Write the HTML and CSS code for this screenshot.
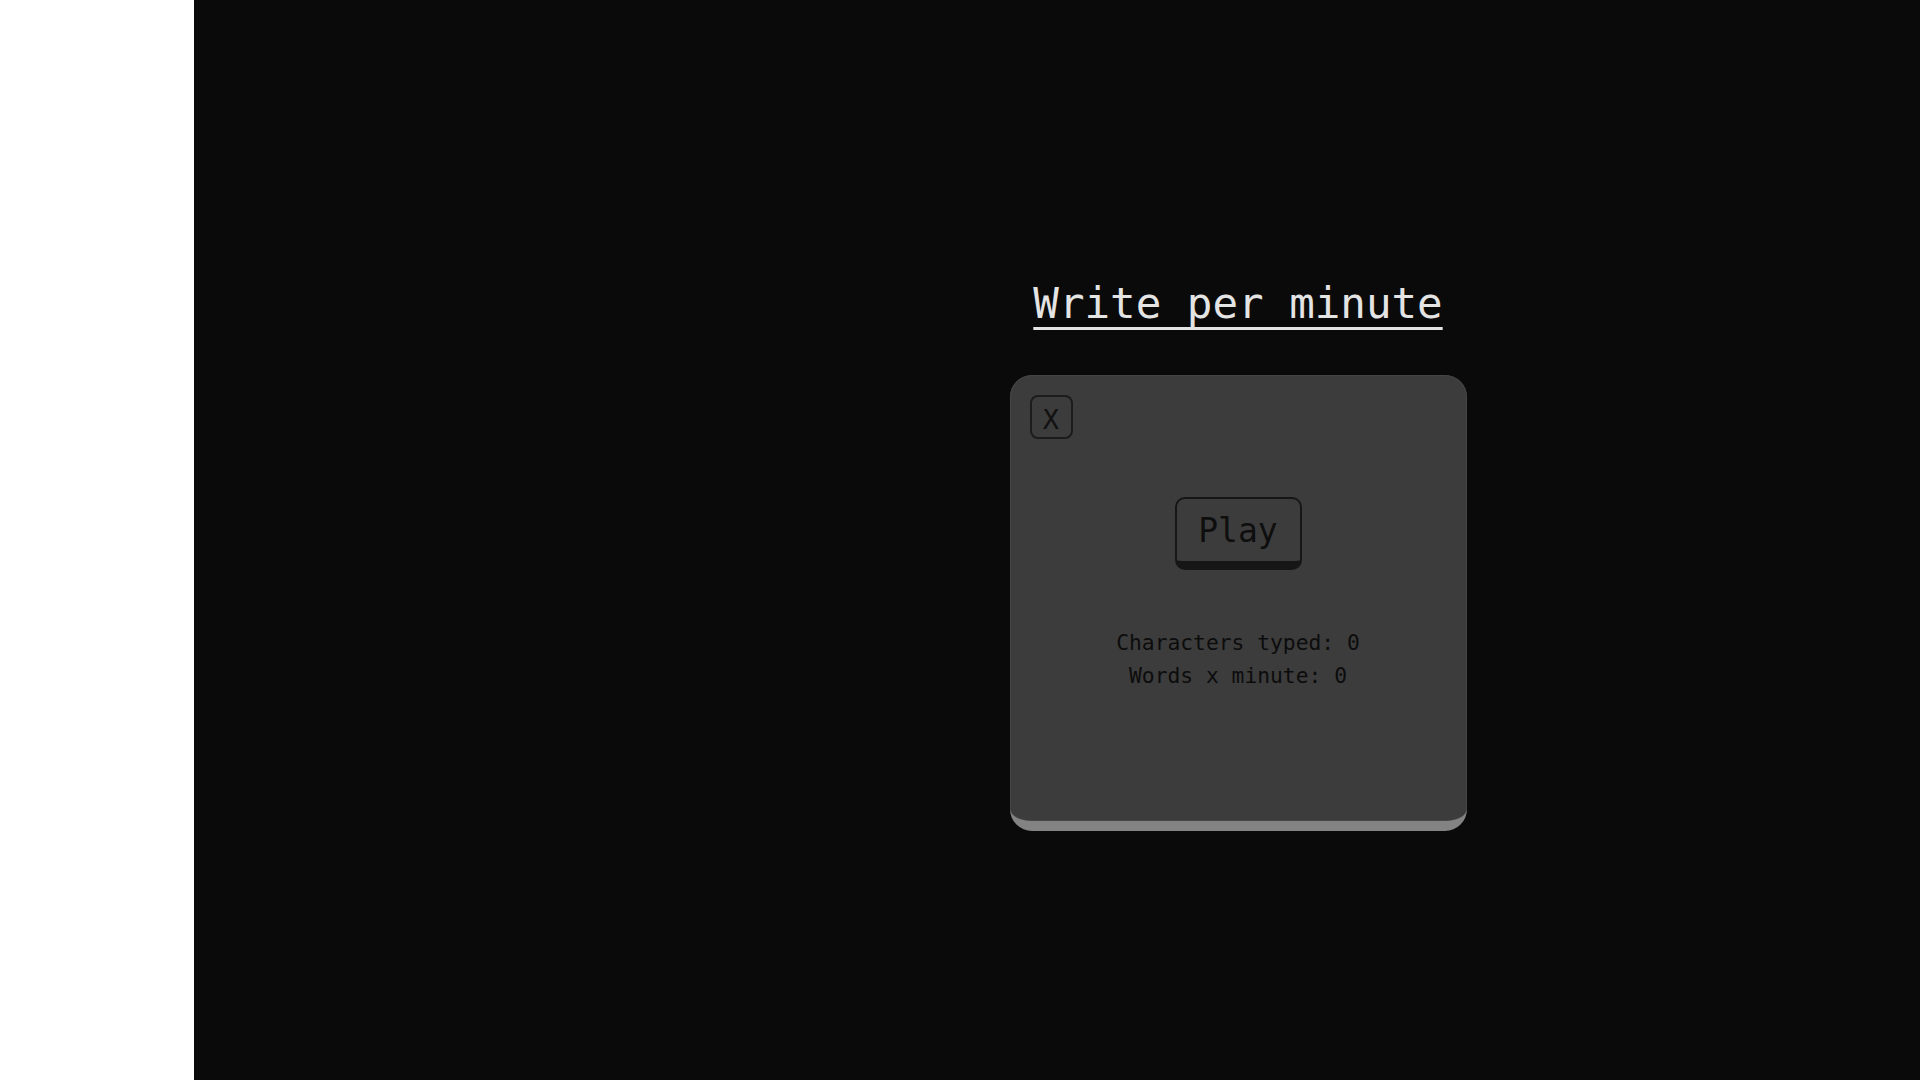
FILE: index.html
```html
<!DOCTYPE html>
<html lang="en">
<head>
<meta charset="utf-8">
<title>Write per minute</title>
<link rel="stylesheet" href="styles.css">
</head>
<body>
  <aside class="sidebar"></aside>
  <main class="main">
    <h1 class="title">Write per minute</h1>
    <section class="card">
      <button class="close-btn">X</button>
      <button class="play-btn">Play</button>
      <div class="stats">
        <p class="stat">Characters typed: 0</p>
        <p class="stat">Words x minute: 0</p>
      </div>
    </section>
  </main>
</body>
</html>
```

FILE: styles.css
```css
html, body {
  margin: 0;
  padding: 0;
  height: 100%;
}
body {
  display: flex;
  background: #0a0a0a;
  font-family: "DejaVu Sans Mono", "Liberation Mono", monospace;
}
.sidebar {
  width: 194px;
  flex: none;
  background: #ffffff;
}
.main {
  flex: 1;
  display: flex;
  flex-direction: column;
  align-items: center;
  padding-left: 362px;
  padding-top: 279px;
  background: #0a0a0a;
}
.title {
  margin: 0;
  font-size: 42.5px;
  font-weight: normal;
  line-height: 49px;
  color: #e4e4e4;
  text-decoration: underline;
  text-decoration-thickness: 3px;
  text-underline-offset: 9px;
}
.card {
  margin-top: 47px;
  width: 457px;
  height: 456px;
  box-sizing: border-box;
  padding: 20px;
  background: #3c3c3c;
  border-radius: 22px;
  border-bottom: 10px solid #838383;
  box-shadow: inset 0 0 0 1px #454545;
  display: flex;
  flex-direction: column;
  align-items: center;
}
.close-btn {
  align-self: flex-start;
  width: 43px;
  height: 44px;
  padding: 4px 0 0;
  background: #3c3c3c;
  border: 2px solid #1c1c1c;
  border-radius: 8px;
  font-family: inherit;
  font-size: 27px;
  color: #111111;
  line-height: 1;
}
.play-btn {
  margin-top: 58px;
  width: 127px;
  height: 73px;
  padding: 0;
  box-sizing: border-box;
  background: #3c3c3c;
  border: 2px solid #161616;
  border-bottom-width: 9px;
  border-radius: 10px;
  font-family: inherit;
  font-size: 33px;
  color: #0e0e0e;
}
.stats {
  margin-top: 56px;
  text-align: center;
}
.stat {
  margin: 0;
  font-size: 21.3px;
  line-height: 33px;
  color: #0c0c0c;
}
```
